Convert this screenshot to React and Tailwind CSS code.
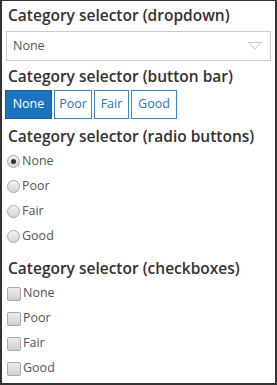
export default function App() {
  const items = ["None", "Poor", "Fair", "Good"];
  const widths = ["w-[47px]", "w-[38px]", "w-[35px]", "w-[46px]"];
  const title = "text-[15.5px] leading-[20px] font-semibold text-[#323232] pl-[2px]";
  return (
    <div className="w-[277px] h-[385px] box-border border-t border-l-2 border-r-2 border-b-2 border-[#333] bg-white pl-[4px] pr-[4px] pt-[4px] font-['Open_Sans',sans-serif]">
      <div className={title}>Category selector (dropdown)</div>
      <div className="mt-[6px] h-[30px] w-[265px] border border-[#ccc] flex items-center justify-between pl-[6px] pr-[8px]">
        <span className="text-[12.5px] text-[#555]">None</span>
        <svg width="14" height="8" viewBox="0 0 14 8">
          <path d="M0.5 0.5 L13.5 0.5 L7 7.2 Z" fill="none" stroke="#c8c8c8" strokeWidth="1" />
        </svg>
      </div>
      <div className={title + " mt-[5px]"}>Category selector (button bar)</div>
      <div className="mt-[4px] -ml-[1px] flex gap-[2px]">
        {items.map((t, i) => (
          <div
            key={t}
            className={
              "h-[29px] flex items-center justify-center border text-[12.5px] " + widths[i] + " " +
              (i === 0 ? "bg-[#1e73be] border-[#1a5d99] text-white" : "bg-white border-[#3a87c8] text-[#2a72b8]")
            }
          >
            {t}
          </div>
        ))}
      </div>
      <div className={title + " mt-[7px]"}>Category selector (radio buttons)</div>
      <div className="mt-[3px] flex flex-col">
        {items.map((t, i) => (
          <div key={t} className="h-[25px] flex items-center text-[12.5px] text-[#555] pl-[1px]">
            <span className="w-[13px] h-[13px] rounded-full border border-[#a8a8a8] bg-gradient-to-b from-[#f4f4f4] to-[#d4d4d4] flex items-center justify-center mr-[2px]">
              {i === 0 && <span className="w-[5px] h-[5px] rounded-full bg-[#333]" />}
            </span>
            {t}
          </div>
        ))}
      </div>
      <div className={title + " mt-[9px]"}>Category selector (checkboxes)</div>
      <div className="mt-[3px] flex flex-col">
        {items.map((t) => (
          <div key={t} className="h-[25px] flex items-center text-[12.5px] text-[#555] pl-[1px]">
            <span className="w-[14px] h-[14px] rounded-[2px] border border-[#a8a8a8] bg-gradient-to-b from-[#ececec] to-[#d0d0d0] mr-[2px]" />
            {t}
          </div>
        ))}
      </div>
    </div>
  );
}
